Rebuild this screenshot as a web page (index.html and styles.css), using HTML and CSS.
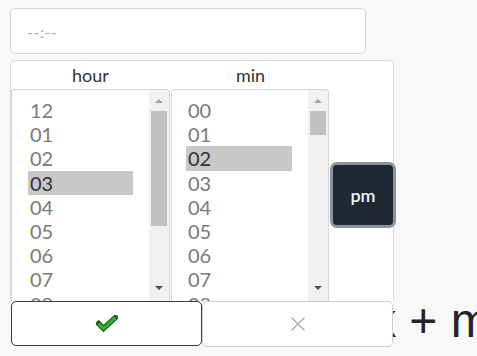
FILE: index.html
```html
<!DOCTYPE html>
<html lang="en">
<head>
<meta charset="utf-8">
<title>Time picker</title>
<link rel="stylesheet" href="styles.css">
</head>
<body>
<div class="page">
  <div class="field"><span class="placeholder">--:--</span></div>
  <div class="stage">
    <h1 class="behind">Clock + m</h1>
    <div class="picker">
      <div class="box">
        <div class="labels"><span class="lab">hour</span><span class="lab">min</span></div>
        <div class="cols">
          <div class="select hour">
            <ul class="opts">
              <li>12</li><li>01</li><li>02</li><li class="sel">03</li><li>04</li><li>05</li><li>06</li><li>07</li><li>08</li>
            </ul>
            <div class="sb">
              <span class="btn"><span class="arr up"></span></span>
              <span class="thumb thumb-hour"></span>
              <span class="fill"></span>
              <span class="btn"><span class="arr down"></span></span>
            </div>
          </div>
          <div class="select min">
            <ul class="opts">
              <li>00</li><li>01</li><li class="sel">02</li><li>03</li><li>04</li><li>05</li><li>06</li><li>07</li><li>08</li>
            </ul>
            <div class="sb">
              <span class="btn"><span class="arr up"></span></span>
              <span class="thumb thumb-min"></span>
              <span class="fill"></span>
              <span class="btn"><span class="arr down"></span></span>
            </div>
          </div>
          <div class="ampm"><button class="pm">pm</button></div>
        </div>
      </div>
      <div class="actions">
        <button class="act ok" aria-label="OK">
          <svg width="22" height="18" viewBox="0 0 22 18">
            <polyline points="2.5,8.5 7.5,13.5 19.5,2.5" fill="none" stroke="#1b5e1b" stroke-width="5.4" stroke-linecap="square" stroke-linejoin="miter"/>
            <polyline points="2.5,8.5 7.5,13.5 19.5,2.5" fill="none" stroke="#2db52d" stroke-width="3" stroke-linecap="butt" stroke-linejoin="miter"/>
          </svg>
        </button>
        <button class="act cancel" aria-label="Cancel">
          <svg width="14" height="14" viewBox="0 0 14 14">
            <line x1="0.5" y1="0.5" x2="13.5" y2="13.5" stroke="#a8a8a8" stroke-width="1.3"/>
            <line x1="13.5" y1="0.5" x2="0.5" y2="13.5" stroke="#a8a8a8" stroke-width="1.3"/>
          </svg>
        </button>
      </div>
    </div>
  </div>
</div>
</body>
</html>
```

FILE: styles.css
```css
html, body {
  margin: 0;
  padding: 0;
  overflow: hidden;
  background: #f8f8f8;
}
body {
  width: 477px;
  height: 356px;
  font-family: Lato, "Liberation Sans", sans-serif;
}
.page {
  padding: 8px 10px 0 10px;
}
.field {
  box-sizing: border-box;
  width: 356px;
  height: 46px;
  background: #fff;
  border: 1px solid #d6d6d6;
  border-radius: 5px;
  display: flex;
  align-items: center;
  padding-left: 16px;
}
.placeholder {
  font-size: 16px;
  color: #aaa;
  letter-spacing: 0.5px;
}
.stage {
  position: relative;
  display: flow-root;
  margin-top: 6px;
  height: 296px;
}
.behind {
  margin: 233px 0 0 266px;
  font-family: "Liberation Sans", Arial, sans-serif;
  font-weight: normal;
  font-size: 48px;
  line-height: 55px;
  color: #212529;
  white-space: nowrap;
}
.picker {
  position: absolute;
  left: 0;
  top: 0;
  width: 384px;
}
.box {
  box-sizing: border-box;
  width: 384px;
  background: #fff;
  border: 1px solid #d9d9d9;
  border-bottom: none;
  border-radius: 5px 5px 0 0;
}
.labels {
  display: grid;
  grid-template-columns: 159px 159px;
  column-gap: 1px;
  height: 28px;
  line-height: 28px;
  font-size: 18px;
  color: #333;
}
.lab {
  text-align: center;
}
.cols {
  display: grid;
  grid-template-columns: 159px 158px 1fr;
  column-gap: 1px;
  height: 212px;
}
.select {
  box-sizing: border-box;
  display: flex;
  height: 212px;
  border: 1px solid #d6d6d6;
  border-bottom: none;
  border-radius: 4px 4px 0 0;
  overflow: hidden;
  background: #fff;
}
.opts {
  flex: 1;
  list-style: none;
  margin: 0;
  padding: 8px 0 0 16px;
  overflow: hidden;
}
.min .opts {
  padding-left: 14px;
}
.opts li {
  width: 105px;
  box-sizing: border-box;
  padding-left: 2px;
  font-size: 20px;
  line-height: 24.2px;
  color: #7a7a7a;
}
.min .opts li {
  width: 106px;
}
.opts li.sel {
  background: #c8c8c8;
  color: #333;
}
.sb {
  flex: 0 0 20px;
  display: flex;
  flex-direction: column;
  background: #f1f1f1;
}
.btn {
  height: 21px;
  flex: 0 0 21px;
  display: flex;
  align-items: center;
  justify-content: center;
}
.btn:last-child {
  margin-bottom: 3px;
}
.arr {
  width: 0;
  height: 0;
  border-left: 4px solid transparent;
  border-right: 4px solid transparent;
}
.arr.up {
  border-bottom: 4px solid #a3a3a3;
}
.arr.down {
  border-top: 4px solid #505050;
}
.thumb {
  margin: 0 2px;
  background: #c1c1c1;
}
.thumb-hour {
  height: 115px;
}
.thumb-min {
  height: 24px;
}
.fill {
  flex: 1;
}
.ampm {
  display: flex;
  align-items: center;
  justify-content: center;
}
.pm {
  flex: 0 0 66px;
  width: 66px;
  height: 66px;
  box-sizing: border-box;
  border: 3px solid #8a949c;
  border-radius: 7px;
  background: #1d2833;
  color: #f2f6f8;
  font-family: Lato, "Liberation Sans", sans-serif;
  font-size: 18px;
  font-weight: 600;
  padding: 0;
}
.actions {
  display: grid;
  grid-template-columns: 191px 191px;
  padding-left: 1px;
}
.act {
  box-sizing: border-box;
  height: 46px;
  background: #fff;
  border-radius: 5px;
  display: flex;
  align-items: center;
  justify-content: center;
  padding: 0;
}
.ok {
  height: 45px;
  border: 1px solid #343a40;
}
.cancel {
  border: 1px solid #cfcfcf;
}
```
